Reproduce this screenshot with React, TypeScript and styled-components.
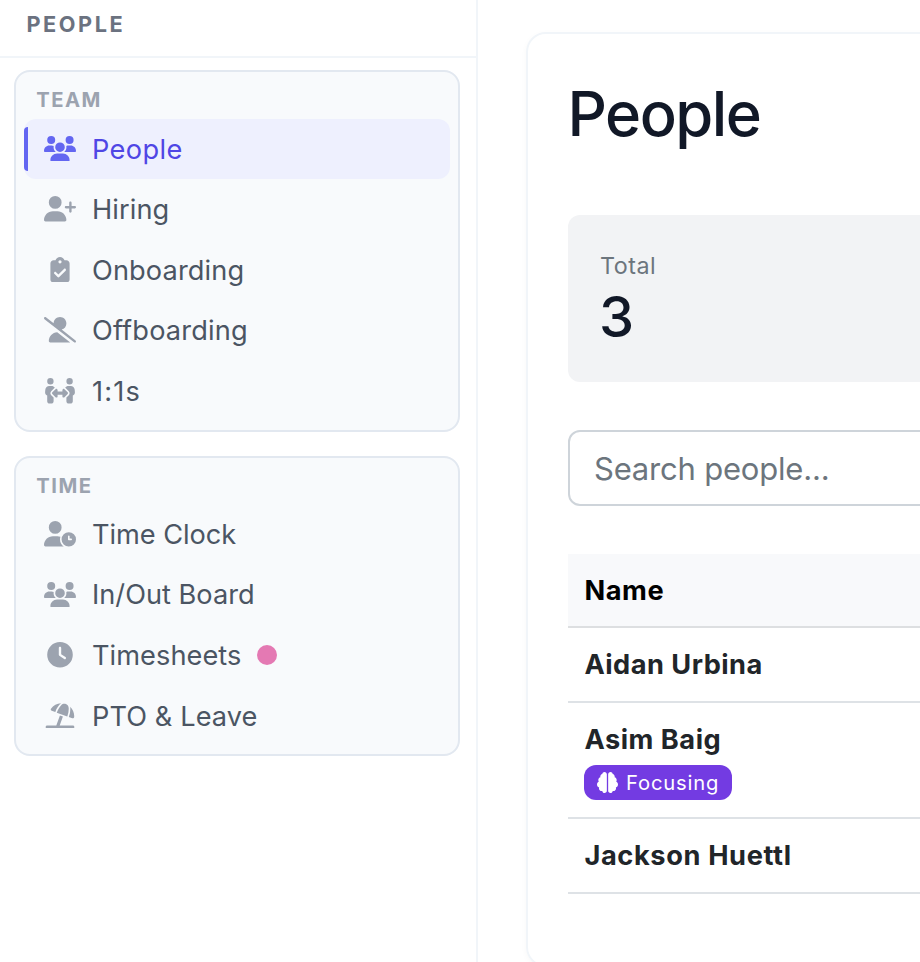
import React from "react";
import styled, { createGlobalStyle, css } from "styled-components";
import type { IconType } from "react-icons";
import {
  FaBrain,
  FaClipboardCheck,
  FaClock,
  FaPeopleArrows,
  FaUmbrellaBeach,
  FaUserClock,
  FaUserPlus,
  FaUserSlash,
  FaUsers,
} from "react-icons/fa6";

const GlobalStyle = createGlobalStyle`
  *, *::before, *::after { box-sizing: border-box; }
  body {
    margin: 0;
    background: #fff;
    font-family: Inter, "Liberation Sans", sans-serif;
    overflow: hidden;
  }
`;

const Page = styled.div`
  display: flex;
  height: 962px;
  overflow: hidden;
`;

const Sidebar = styled.aside`
  flex: none;
  width: 478px;
  border-right: 2px solid #f1f5f9;
`;

const SidebarHeader = styled.header`
  height: 58px;
  padding: 9px 0 0 26.5px;
  border-bottom: 2px solid #f1f5f9;
  color: #6b7280;
  font-size: 21.7px;
  font-weight: 700;
  line-height: 30px;
  letter-spacing: 2.55px;
`;

const Nav = styled.nav`
  display: flex;
  flex-direction: column;
  gap: 24px;
  padding: 12px 16px 0 14px;
`;

const NavGroup = styled.section<{ $height: number }>`
  height: ${(p) => p.$height}px;
  padding: 0 8px;
  border: 2px solid #e2e8f0;
  border-radius: 16px;
  background: #f8fafc;
`;

const NavTitle = styled.h2<{ $height: number }>`
  height: ${(p) => p.$height}px;
  margin: 0;
  padding: 12.7px 0 0 12.3px;
  color: #9ca3af;
  font-size: 20.2px;
  font-weight: 700;
  line-height: 30px;
  letter-spacing: 1.5px;
`;

const NavList = styled.ul`
  display: flex;
  flex-direction: column;
  gap: 0.6px;
  margin: 0;
  padding: 0;
  list-style: none;
`;

const NavItem = styled.li<{ $active?: boolean }>`
  position: relative;
  display: flex;
  align-items: center;
  height: 60px;
  padding-left: 20px;
  border-radius: 12px;
  color: #4b5563;
  ${(p) =>
    p.$active &&
    css`
      background: #eef0fe;
      color: #4f46e5;

      &::before {
        content: "";
        position: absolute;
        left: 0;
        top: 8px;
        width: 4px;
        height: 44px;
        border-radius: 4px 0 0 4px;
        background: #6366f1;
      }
    `}
`;

const NavIcon = styled.span<{ $active?: boolean }>`
  display: flex;
  justify-content: center;
  width: 32px;
  margin: 0 16px 1.2px 0;
  color: ${(p) => (p.$active ? "#6366f1" : "#9ca3af")};

  svg {
    flex: none;
    width: 32px;
    height: 25.6px;
  }
`;

const NavLabel = styled.span<{ $spacing: number }>`
  padding-top: 1.2px;
  font-size: 27.2px;
  line-height: 40px;
  letter-spacing: ${(p) => p.$spacing}px;
  white-space: nowrap;
`;

const Dot = styled.span`
  width: 20px;
  height: 20px;
  margin-left: 15.5px;
  border-radius: 50%;
  background: #e479b3;
`;

const Main = styled.main`
  flex: none;
  width: 900px;
  padding: 32px 0 0 48px;
`;

const Card = styled.div`
  height: 935px;
  padding: 0 40px;
  border: 2px solid #f1f5f9;
  border-radius: 20px;
  box-shadow: 0 2px 6px rgba(0, 0, 0, 0.03);
`;

const PageTitle = styled.h1`
  height: 181px;
  margin: 0;
  padding-top: 40px;
  color: #111827;
  font-size: 61.5px;
  font-weight: 500;
  line-height: 80px;
  letter-spacing: -1.5px;
  text-indent: -0.5px;
`;

const Stat = styled.div`
  height: 167px;
  padding: 35.5px 32px 0;
  border-radius: 12px;
  background: #f2f3f5;
`;

const StatLabel = styled.div`
  color: #6c757d;
  font-size: 23.3px;
  line-height: 30px;
  letter-spacing: 0.5px;
`;

const StatValue = styled.div`
  margin-top: 6px;
  color: #111827;
  font-size: 56px;
  font-weight: 500;
  line-height: 60px;
  text-indent: -1px;
`;

const Search = styled.input`
  display: block;
  width: 100%;
  height: 76px;
  margin: 48px 0;
  padding: 0 24px;
  border: 2px solid #ced4da;
  border-radius: 12px;
  background: #fff;
  font: 400 31px Inter, sans-serif;
  letter-spacing: -0.2px;

  &::placeholder {
    color: #6c757d;
    opacity: 1;
  }
`;

const TableHeader = styled.div`
  height: 74px;
  padding: 16.5px 16.5px 0;
  border-bottom: 2px solid #dddfe1;
  background: #f8f9fb;
  color: #000;
  font-size: 27.2px;
  font-weight: 700;
  line-height: 40px;
  letter-spacing: 0.55px;
`;

const Row = styled.div<{ $height: number }>`
  height: ${(p) => p.$height}px;
  padding: 17px 16px 0;
  border-bottom: 2px solid #dee2e6;
  color: #212529;
`;

const PersonName = styled.div<{ $spacing: number }>`
  font-size: 27.2px;
  font-weight: 700;
  line-height: 40px;
  letter-spacing: ${(p) => p.$spacing}px;
  text-indent: 0.4px;
`;

const Badge = styled.span`
  display: flex;
  align-items: center;
  gap: 8px;
  width: 148px;
  height: 35px;
  margin-top: 5px;
  padding-left: 13px;
  border-radius: 12px;
  background: #733be2;
  color: #fff;
  font-size: 20.2px;
  line-height: 30px;
  letter-spacing: 0.85px;

  svg {
    flex: none;
    width: 21px;
    height: 21px;
  }
`;

const BadgeText = styled.span`
  padding-top: 1px;
`;

type Item = { label: string; icon: IconType; spacing: number; active?: boolean; dot?: boolean };

const groups: { title: string; height: number; titleHeight: number; items: Item[] }[] = [
  {
    title: "TEAM",
    height: 362,
    titleHeight: 47,
    items: [
      { label: "People", icon: FaUsers, spacing: 0.4, active: true },
      { label: "Hiring", icon: FaUserPlus, spacing: 0.1 },
      { label: "Onboarding", icon: FaClipboardCheck, spacing: 0.12 },
      { label: "Offboarding", icon: FaUserSlash, spacing: 0.16 },
      { label: "1:1s", icon: FaPeopleArrows, spacing: 1.2 },
    ],
  },
  {
    title: "TIME",
    height: 300,
    titleHeight: 46.3,
    items: [
      { label: "Time Clock", icon: FaUserClock, spacing: -0.05 },
      { label: "In/Out Board", icon: FaUsers, spacing: 0 },
      { label: "Timesheets", icon: FaClock, spacing: 0.05, dot: true },
      { label: "PTO & Leave", icon: FaUmbrellaBeach, spacing: 0.08 },
    ],
  },
];

const people = [
  { name: "Aidan Urbina", height: 75, spacing: 0.48 },
  { name: "Asim Baig", height: 116, spacing: 0.52, status: "Focusing" },
  { name: "Jackson Huettl", height: 75, spacing: 0.63 },
];

export default function App() {
  return (
    <Page>
      <GlobalStyle />
      <Sidebar>
        <SidebarHeader>PEOPLE</SidebarHeader>
        <Nav>
          {groups.map((group) => (
            <NavGroup key={group.title} $height={group.height}>
              <NavTitle $height={group.titleHeight}>{group.title}</NavTitle>
              <NavList>
                {group.items.map(({ label, icon: Icon, spacing, active, dot }) => (
                  <NavItem key={label} $active={active}>
                    <NavIcon $active={active}>
                      <Icon />
                    </NavIcon>
                    <NavLabel $spacing={spacing}>{label}</NavLabel>
                    {dot && <Dot />}
                  </NavItem>
                ))}
              </NavList>
            </NavGroup>
          ))}
        </Nav>
      </Sidebar>
      <Main>
        <Card>
          <PageTitle>People</PageTitle>
          <Stat>
            <StatLabel>Total</StatLabel>
            <StatValue>3</StatValue>
          </Stat>
          <Search placeholder="Search people..." />
          <TableHeader>Name</TableHeader>
          {people.map((person) => (
            <Row key={person.name} $height={person.height}>
              <PersonName $spacing={person.spacing}>{person.name}</PersonName>
              {person.status && (
                <Badge>
                  <FaBrain />
                  <BadgeText>{person.status}</BadgeText>
                </Badge>
              )}
            </Row>
          ))}
        </Card>
      </Main>
    </Page>
  );
}
